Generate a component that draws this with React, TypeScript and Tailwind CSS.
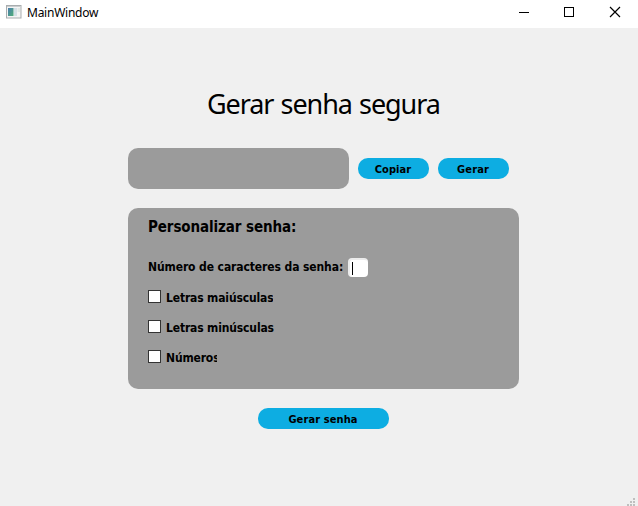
import React from "react";

function PillButton({ label, className }: { label: string; className: string }) {
  return (
    <button
      className={`flex h-[21px] items-center justify-center rounded-[10px] bg-[#0dade2] text-[11px] leading-[21px] font-bold tracking-[0.1px] whitespace-nowrap text-black ${className}`}
    >
      <span className="pt-px pr-px">{label}</span>
    </button>
  );
}

function CheckRow({ label, className }: { label: string; className: string }) {
  return (
    <div className="flex h-[14px] items-start">
      <span className="h-[13px] w-[13px] shrink-0 border border-[#333] bg-white" />
      <span className={`ml-[5px] overflow-hidden text-[12px] leading-[17px] font-bold tracking-[-0.15px] whitespace-nowrap ${className}`}>
        {label}
      </span>
    </div>
  );
}

function TitleBar() {
  return (
    <header className="flex h-7 items-start bg-white">
      <svg className="mt-[5px] ml-[6px] shrink-0" width="16" height="14" viewBox="0 0 16 14">
        <defs>
          <linearGradient id="pane" x1="0" y1="0" x2="1" y2="1">
            <stop offset="0" stopColor="#4a7dae" />
            <stop offset="1" stopColor="#4fae78" />
          </linearGradient>
        </defs>
        <rect x="0.5" y="0.5" width="14.5" height="12.5" fill="#f4f4f4" stroke="#a9adaf" />
        <path d="M1 1.5h13.5" stroke="#c9cdcf" />
        <rect x="2" y="3" width="5.5" height="8" fill="url(#pane)" />
        <rect x="8" y="3" width="3" height="8" fill="#d3e0e6" />
        <rect x="11.5" y="3" width="2.5" height="4" fill="#dfe7e5" />
      </svg>
      <span className="mt-[5px] ml-[5px] grow font-['Noto_Sans','Open_Sans',sans-serif] text-[12px] leading-[16px] tracking-[-0.25px]">
        MainWindow
      </span>
      <svg width="138" height="27" viewBox="0 0 138 27" fill="none" stroke="#000" shapeRendering="crispEdges">
        <path d="M19 12.5h10" />
        <rect x="64.5" y="7.5" width="9" height="9" />
        <path d="M110 7l10 10M120 7l-10 10" shapeRendering="auto" strokeWidth="1.2" />
      </svg>
    </header>
  );
}

export default function App() {
  return (
    <div className="flex h-[506px] w-[638px] flex-col overflow-hidden bg-[#f0f0f0] font-['DejaVu_Sans_Condensed','DejaVu_Sans',sans-serif] [font-stretch:condensed] text-black">
      <TitleBar />
      <main className="ml-32 flex w-[391px] grow flex-col pt-[56px]">
        <h1 className="ml-[79px] h-[64px] font-['Noto_Sans','Open_Sans',sans-serif] text-[27px] leading-[40px] tracking-[-1.1px] [word-spacing:1.4px] whitespace-nowrap">
          Gerar senha segura
        </h1>
        <div className="flex h-[41px] items-center">
          <div className="h-[41px] w-[221px] rounded-[10px] bg-[#9b9b9b]" />
          <PillButton label="Copiar" className="ml-[9px] w-[71px]" />
          <PillButton label="Gerar" className="ml-[9px] w-[71px]" />
        </div>
        <section className="mt-[19px] flex h-[181px] flex-col rounded-[10px] bg-[#9b9b9b] pt-[8px] pl-5">
          <h2 className="h-[42px] text-[15px] leading-[22px] font-bold tracking-[-0.1px] whitespace-nowrap">
            Personalizar senha:
          </h2>
          <div className="flex h-[19px] items-start">
            <span className="w-[200px] text-[12px] leading-[19px] font-bold tracking-[-0.1px] whitespace-nowrap">
              Número de caracteres da senha:
            </span>
            <span className="flex h-[19px] w-5 items-center rounded-[4px] border-t-2 border-l-2 border-[#ececec] bg-white pl-[2px]">
              <span className="h-[13px] w-px bg-black" />
            </span>
          </div>
          <div className="mt-[13px] flex flex-col gap-4">
            <CheckRow label="Letras maiúsculas" className="" />
            <CheckRow label="Letras minúsculas" className="" />
            <CheckRow label="Números" className="w-[51px]" />
          </div>
        </section>
        <PillButton label="Gerar senha" className="mt-[19px] ml-[130px] w-[131px]" />
      </main>
      <footer className="flex h-[9px] justify-end pr-[3px]">
        <svg width="9" height="9" viewBox="0 0 9 9" fill="#bfbfbf" shapeRendering="crispEdges">
          <path d="M7 1h2v2h-2zM4 4h2v2h-2zM7 4h2v2h-2zM1 7h2v2h-2zM4 7h2v2h-2zM7 7h2v2h-2z" />
        </svg>
      </footer>
    </div>
  );
}
